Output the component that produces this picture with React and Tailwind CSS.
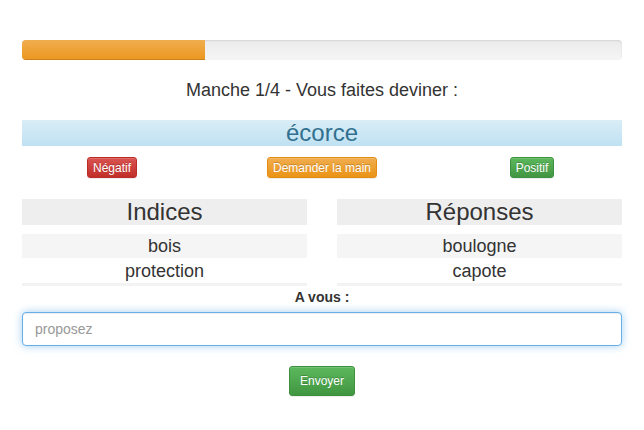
import React from "react";

const btnBase =
  "inline-flex items-center justify-center text-white rounded-[3px] border [text-shadow:0_-1px_0_rgba(0,0,0,0.2)] shadow-[inset_0_1px_0_rgba(255,255,255,0.15),0_1px_1px_rgba(0,0,0,0.075)]";

export default function App() {
  return (
    <div className="w-[644px] h-[430px] bg-white text-[#333] font-['Liberation_Sans',Arial,sans-serif] px-[22px] pt-[40px]">
      {/* progress */}
      <div className="h-[20px] rounded-[4px] overflow-hidden bg-[linear-gradient(to_bottom,#ebebeb,#f5f5f5)] shadow-[inset_0_1px_2px_rgba(0,0,0,0.1)]">
        <div className="h-full w-[30.5%] bg-[linear-gradient(to_bottom,#f0ad4e,#ec971f)] shadow-[inset_0_-1px_0_rgba(0,0,0,0.15)]" />
      </div>

      <div className="mt-[20px] h-[20px] leading-[20px] text-[18px] text-center">
        Manche 1/4 - Vous faites deviner :
      </div>

      <div className="mt-[20px] h-[26px] leading-[26px] text-[24px] text-center text-[#31708f] bg-[linear-gradient(to_bottom,#d9edf7,#bfe1f2)]">
        écorce
      </div>

      <div className="mt-[11px] -mx-[15px] grid grid-cols-3 h-[21px] text-[12px] leading-[18px]">
        <div className="flex justify-center">
          <button className={`${btnBase} h-[21px] px-[5px] border-[#b92c28] bg-[linear-gradient(to_bottom,#d9534f,#c12e2a)]`}>
            Négatif
          </button>
        </div>
        <div className="flex justify-center">
          <button className={`${btnBase} h-[21px] px-[5px] border-[#e38d13] bg-[linear-gradient(to_bottom,#f0ad4e,#eb9316)]`}>
            Demander la main
          </button>
        </div>
        <div className="flex justify-center">
          <button className={`${btnBase} h-[21px] px-[5px] border-[#3e8f3e] bg-[linear-gradient(to_bottom,#5cb85c,#419641)]`}>
            Positif
          </button>
        </div>
      </div>

      <div className="mt-[21px] grid grid-cols-2 gap-x-[30px]">
        {[
          { h: "Indices", rows: ["bois", "protection"] },
          { h: "Réponses", rows: ["boulogne", "capote"] },
        ].map((col) => (
          <div key={col.h} className="flex flex-col">
            <div className="h-[26px] leading-[26px] text-[24px] text-center bg-[#eeeeee]">
              {col.h}
            </div>
            <div className="mt-[9px] h-[24px] leading-[25px] text-[18px] text-center bg-[#f5f5f5]">
              {col.rows[0]}
            </div>
            <div className="h-[25px] leading-[26px] text-[18px] text-center bg-white">
              {col.rows[1]}
            </div>
            <div className="h-[3px] bg-[#f3f3f3]" />
          </div>
        ))}
      </div>

      <div className="h-[21px] leading-[22px] text-[14px] font-bold text-center">
        A vous :
      </div>

      <div className="mt-[5px] h-[34px] rounded-[4px] border border-[#66afe9] bg-white px-[12px] flex items-center text-[14px] text-[#999] shadow-[inset_0_1px_1px_rgba(0,0,0,0.075),0_0_8px_rgba(102,175,233,0.6)]">
        proposez
      </div>

      <div className="mt-[20px] flex justify-center">
        <button className={`${btnBase} h-[30px] px-[10px] text-[12px] border-[#3e8f3e] bg-[linear-gradient(to_bottom,#5cb85c,#419641)]`}>
          Envoyer
        </button>
      </div>
    </div>
  );
}
